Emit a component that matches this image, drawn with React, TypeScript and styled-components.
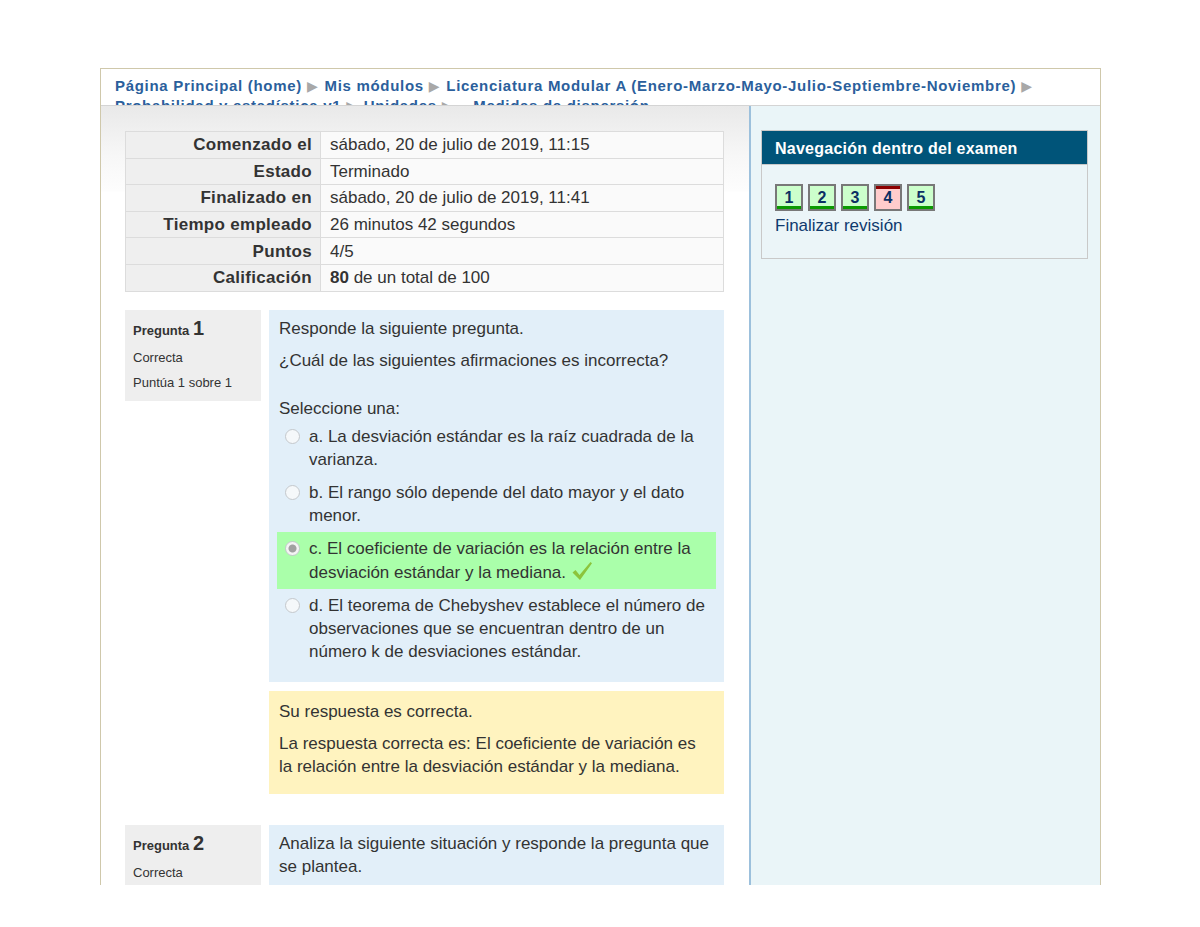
import styled, { createGlobalStyle } from "styled-components";

const GlobalStyle = createGlobalStyle`
  html, body {
    margin: 0;
    padding: 0;
    background: #fff;
  }
  body {
    font-family: "Liberation Sans", Arial, sans-serif;
    color: #333;
  }
  * {
    box-sizing: border-box;
  }
`;

const summary: [string, React.ReactNode][] = [
  ["Comenzado el", "sábado, 20 de julio de 2019, 11:15"],
  ["Estado", "Terminado"],
  ["Finalizado en", "sábado, 20 de julio de 2019, 11:41"],
  ["Tiempo empleado", "26 minutos 42 segundos"],
  ["Puntos", "4/5"],
  [
    "Calificación",
    <>
      <b>80</b> de un total de 100
    </>,
  ],
];

const options = [
  { text: "a. La desviación estándar es la raíz cuadrada de la varianza.", chosen: false },
  { text: "b. El rango sólo depende del dato mayor y el dato menor.", chosen: false },
  { text: "c. El coeficiente de variación es la relación entre la desviación estándar y la mediana.", chosen: true },
  {
    text: "d. El teorema de Chebyshev establece el número de observaciones que se encuentran dentro de un número k de desviaciones estándar.",
    chosen: false,
  },
];

const navItems = [
  { n: 1, ok: true },
  { n: 2, ok: true },
  { n: 3, ok: true },
  { n: 4, ok: false },
  { n: 5, ok: true },
];

const CheckIcon = () => (
  <CheckSvg viewBox="0 0 22 22" width="22" height="22">
    <path d="M1.5 12.5 L4.5 10 L8.5 15 L19.5 2 L21 3.2 L9 20 Z" fill="#8cc43c" />
  </CheckSvg>
);

const App = () => {
  return (
    <>
      <GlobalStyle />
      <Page>
        <Frame>
          <Header>
            <Crumbs>
              <CrumbLink>Página Principal (home)</CrumbLink>
              <Sep>▶</Sep>
              <CrumbLink>Mis módulos</CrumbLink>
              <Sep>▶</Sep>
              <CrumbLink>Licenciatura Modular A (Enero-Marzo-Mayo-Julio-Septiembre-Noviembre)</CrumbLink>
              <Sep>▶</Sep>
            </Crumbs>
            <Crumbs>
              <CrumbLink>Probabilidad y estadística v1</CrumbLink>
              <Sep>▶</Sep>
              <CrumbLink>Unidades</CrumbLink>
              <Sep>▶</Sep>
              <CrumbLink>–  Medidas de dispersión</CrumbLink>
            </Crumbs>
          </Header>

          <Main>
            <Content>
              <Summary>
                <tbody>
                  {summary.map(([label, value]) => (
                    <tr key={label}>
                      <LabelCell>{label}</LabelCell>
                      <ValueCell>{value}</ValueCell>
                    </tr>
                  ))}
                </tbody>
              </Summary>

              <Question>
                <Info>
                  <QTitle>
                    Pregunta <QNum>1</QNum>
                  </QTitle>
                  <QState>Correcta</QState>
                  <QState>Puntúa 1 sobre 1</QState>
                </Info>
                <QBody>
                  <Formulation>
                    <Para>Responde la siguiente pregunta.</Para>
                    <Para $gap={25}>¿Cuál de las siguientes afirmaciones es incorrecta?</Para>
                    <Para $gap={0}>Seleccione una:</Para>
                    <Answers>
                      {options.map((o) => (
                        <Option key={o.text} $correct={o.chosen}>
                          <Radio $checked={o.chosen} />
                          <OptionText>
                            {o.text}
                            {o.chosen && <CheckIcon />}
                          </OptionText>
                        </Option>
                      ))}
                    </Answers>
                  </Formulation>
                  <Feedback>
                    <Para>Su respuesta es correcta.</Para>
                    <Para $gap={0}>
                      La respuesta correcta es: El coeficiente de variación es la relación entre la desviación
                      estándar y la mediana.
                    </Para>
                  </Feedback>
                </QBody>
              </Question>

              <Question>
                <Info>
                  <QTitle>
                    Pregunta <QNum>2</QNum>
                  </QTitle>
                  <QState>Correcta</QState>
                  <QState>Puntúa 1 sobre 1</QState>
                </Info>
                <QBody>
                  <Formulation>
                    <Para>Analiza la siguiente situación y responde la pregunta que se plantea.</Para>
                  </Formulation>
                </QBody>
              </Question>
            </Content>

            <Side>
              <Block>
                <BlockHeader>Navegación dentro del examen</BlockHeader>
                <BlockBody>
                  <NavButtons>
                    {navItems.map((item) => (
                      <NavButton key={item.n} $ok={item.ok}>
                        {item.n}
                      </NavButton>
                    ))}
                  </NavButtons>
                  <FinishLink>Finalizar revisión</FinishLink>
                </BlockBody>
              </Block>
            </Side>
          </Main>
        </Frame>
      </Page>
    </>
  );
};

const Page = styled.div`
  padding: 68px 0 0 100px;
`;

const Frame = styled.div`
  width: 1001px;
  height: 817px;
  border: 1px solid #cfc8ab;
  border-bottom: none;
  overflow: hidden;
  display: flex;
  flex-direction: column;
`;

const Header = styled.div`
  height: 37px;
  flex-shrink: 0;
  padding: 7px 14px 0;
  border-bottom: 1px solid #d4d4d4;
  overflow: hidden;
`;

const Crumbs = styled.div`
  font-size: 15px;
  font-weight: bold;
  line-height: 19px;
  letter-spacing: 0.7px;
  white-space: nowrap;
`;

const CrumbLink = styled.span`
  color: #2b5f9c;
`;

const Sep = styled.span`
  color: #a8a8a8;
  font-size: 14px;
  margin: 0 6px 0 5px;
  font-family: "DejaVu Sans", sans-serif;
`;

const Main = styled.div`
  flex: 1;
  display: grid;
  grid-template-columns: 648px 1fr;
`;

const Content = styled.div`
  padding: 25px 25px 0 24px;
  background: linear-gradient(to bottom, #e9e9e9 0, #f7f7f7 50px, #fdfdfd 85px, #fff 86px) no-repeat;
  background-size: 100% 87px;
`;

const Summary = styled.table`
  width: 100%;
  border-collapse: collapse;
  font-size: 17px;
  margin-bottom: 18px;
  tr {
    height: 26.6px;
  }
`;

const LabelCell = styled.th`
  width: 195px;
  text-align: right;
  font-weight: bold;
  letter-spacing: 0.3px;
  background: #efefef;
  border: 1px solid #dcdcdc;
  padding: 1px 8px 0;
  line-height: 20px;
  color: #333;
`;

const ValueCell = styled.td`
  background: #fafafa;
  border: 1px solid #dcdcdc;
  padding: 1px 9px 0;
  line-height: 20px;
  b {
    font-weight: bold;
  }
`;

const Question = styled.div`
  display: flex;
  align-items: flex-start;
  gap: 8px;
  margin-bottom: 31px;
`;

const Info = styled.div`
  width: 136px;
  flex-shrink: 0;
  background: #eee;
  padding: 8px 8px 10px;
`;

const QTitle = styled.div`
  font-size: 13px;
  font-weight: bold;
  line-height: 20px;
`;

const QNum = styled.span`
  font-size: 20px;
`;

const QState = styled.div`
  font-size: 13px;
  line-height: 17px;
  margin-top: 8px;
`;

const QBody = styled.div`
  flex: 1;
  display: flex;
  flex-direction: column;
  gap: 9px;
`;

const Formulation = styled.div`
  background: #e2eff9;
  padding: 7px 8px 14px 10px;
  font-size: 17px;
  line-height: 23px;
`;

const Para = styled.p<{ $gap?: number }>`
  margin: 0 0 ${(p) => (p.$gap ?? 9)}px;
`;

const Answers = styled.div`
  margin-left: -2px;
  display: flex;
  flex-direction: column;
`;

const Option = styled.div<{ $correct: boolean }>`
  display: flex;
  align-items: flex-start;
  padding: 5px 0 5px 8px;
  background: ${(p) => (p.$correct ? "#aaffaa" : "transparent")};
`;

const Radio = styled.span<{ $checked: boolean }>`
  flex-shrink: 0;
  width: 15px;
  height: 15px;
  margin: 4px 9px 0 0;
  border-radius: 50%;
  border: 1px solid #c4c8cc;
  background: ${(p) =>
    p.$checked ? "radial-gradient(circle, #a0a0a0 0 3.5px, #f4f4f4 4.5px)" : "#f5f8fa"};
`;

const OptionText = styled.span`
  flex: 1;
`;

const CheckSvg = styled.svg`
  vertical-align: -4px;
  margin-left: 5px;
`;

const Feedback = styled.div`
  background: #fff3bf;
  padding: 9px 16px 16px 10px;
  font-size: 17px;
  line-height: 23px;
`;

const Side = styled.div`
  border-left: 2px solid #9cc0dc;
  background: #eaf5f8;
  padding: 24px 12px 0 10px;
`;

const Block = styled.div`
  border: 1px solid #c9c9c9;
`;

const BlockHeader = styled.div`
  background: #005479;
  color: #fff;
  font-size: 16px;
  font-weight: bold;
  letter-spacing: 0.25px;
  height: 33px;
  line-height: 35px;
  padding: 0 13px;
`;

const BlockBody = styled.div`
  background: #ebf5f8;
  border-top: 1px solid #c9c9c9;
  padding: 19px 13px 22px;
`;

const NavButtons = styled.div`
  display: flex;
  gap: 5px;
  margin-bottom: 5px;
`;

const NavButton = styled.div<{ $ok: boolean }>`
  width: 28px;
  height: 27px;
  border: 2px solid #787878;
  box-shadow: ${(p) => (p.$ok ? "inset 0 -3px #0a9a00" : "inset 0 3px #8b0000")};
  background: ${(p) => (p.$ok ? "#ccffcc" : "#ffcccc")};
  color: #0b2f63;
  font-size: 16px;
  font-weight: bold;
  display: flex;
  align-items: center;
  justify-content: center;
`;

const FinishLink = styled.div`
  color: #0f3a6e;
  font-size: 17px;
  line-height: 20px;
`;

export default App;
